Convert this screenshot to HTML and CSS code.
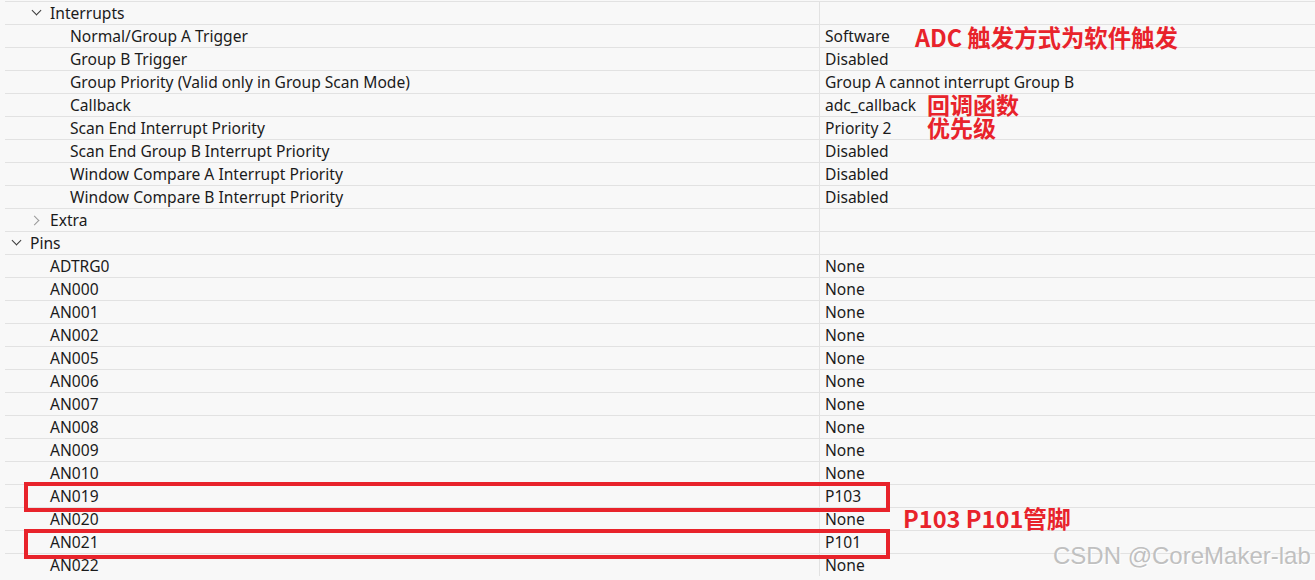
FILE: index.html
```html
<!DOCTYPE html>
<html>
<head>
<meta charset="utf-8">
<link rel="stylesheet" href="styles.css">
</head>
<body>
<div class="page">
  <div class="tree">
    <div class="row"><div class="key l1"><span class="chev down"></span>Interrupts</div><div class="val"></div></div>
    <div class="row"><div class="key l2">Normal/Group A Trigger</div><div class="val">Software</div></div>
    <div class="row"><div class="key l2">Group B Trigger</div><div class="val">Disabled</div></div>
    <div class="row"><div class="key l2">Group Priority (Valid only in Group Scan Mode)</div><div class="val">Group A cannot interrupt Group B</div></div>
    <div class="row"><div class="key l2">Callback</div><div class="val">adc_callback</div></div>
    <div class="row"><div class="key l2">Scan End Interrupt Priority</div><div class="val">Priority 2</div></div>
    <div class="row"><div class="key l2">Scan End Group B Interrupt Priority</div><div class="val">Disabled</div></div>
    <div class="row"><div class="key l2">Window Compare A Interrupt Priority</div><div class="val">Disabled</div></div>
    <div class="row"><div class="key l2">Window Compare B Interrupt Priority</div><div class="val">Disabled</div></div>
    <div class="row"><div class="key l1"><span class="chev right"></span>Extra</div><div class="val"></div></div>
    <div class="row"><div class="key l0"><span class="chev down"></span>Pins</div><div class="val"></div></div>
    <div class="row"><div class="key l1">ADTRG0</div><div class="val">None</div></div>
    <div class="row"><div class="key l1">AN000</div><div class="val">None</div></div>
    <div class="row"><div class="key l1">AN001</div><div class="val">None</div></div>
    <div class="row"><div class="key l1">AN002</div><div class="val">None</div></div>
    <div class="row"><div class="key l1">AN005</div><div class="val">None</div></div>
    <div class="row"><div class="key l1">AN006</div><div class="val">None</div></div>
    <div class="row"><div class="key l1">AN007</div><div class="val">None</div></div>
    <div class="row"><div class="key l1">AN008</div><div class="val">None</div></div>
    <div class="row"><div class="key l1">AN009</div><div class="val">None</div></div>
    <div class="row"><div class="key l1">AN010</div><div class="val">None</div></div>
    <div class="row"><div class="key l1">AN019</div><div class="val">P103</div></div>
    <div class="row"><div class="key l1">AN020</div><div class="val">None</div></div>
    <div class="row"><div class="key l1">AN021</div><div class="val">P101</div></div>
    <div class="row"><div class="key l1">AN022</div><div class="val">None</div></div>
  </div>

  <div class="note note-adc">ADC 触发方式为软件触发</div>
  <div class="note note-cb">回调函数</div>
  <div class="note note-pri">优先级</div>
  <div class="note note-pins">P103 P101管脚</div>
  <div class="box box-an019"></div>
  <div class="box box-an021"></div>
  <div class="watermark">CSDN @CoreMaker-lab</div>
</div>
</body>
</html>
```

FILE: styles.css
```css
html, body {
  margin: 0;
  padding: 0;
  background: #f8f8f8;
}

.page {
  position: relative;
  width: 1315px;
  height: 580px;
  overflow: hidden;
  background: #f8f8f8;
  font-family: "Noto Sans", "Open Sans", "Noto Sans CJK SC", sans-serif;
  font-size: 15.6px;
  color: #1b1b1b;
}

.tree {
  margin-left: 5px;
  padding-top: 1px;
}

.row {
  display: grid;
  grid-template-columns: 814px 1fr;
  height: 23px;
  box-sizing: border-box;
  border-top: 1px solid #e2e2e2;
}

.key, .val {
  display: flex;
  align-items: center;
  white-space: nowrap;
  line-height: 22px;
}

.val {
  border-left: 1px solid #e2e2e2;
  padding-left: 5px;
}

.key.l0 { padding-left: 7px; }
.key.l1 { padding-left: 27px; }
.key.l2 { padding-left: 65px; }

.key.l1:not(:has(.chev)) { padding-left: 45px; }

.chev {
  width: 10px;
  height: 10px;
  margin-right: 8px;
  position: relative;
  flex: none;
}

.chev::before {
  content: "";
  position: absolute;
  width: 6px;
  height: 6px;
  border-right: 1.7px solid #3a3a3a;
  border-bottom: 1.7px solid #3a3a3a;
}

.chev.down::before {
  left: 1px;
  top: -1px;
  transform: rotate(45deg);
}

.chev.right::before {
  left: -1px;
  top: 2px;
  transform: rotate(-45deg);
  border-color: #9a9a9a;
}

.note {
  position: absolute;
  color: #e8232b;
  font-family: "Noto Sans CJK SC", "Noto Sans", sans-serif;
  font-weight: 700;
  font-size: 23px;
  line-height: 23px;
  height: 23px;
  white-space: nowrap;
}

.note-adc { left: 915px; top: 26px; font-size: 23.4px; }
.note-cb { left: 927px; top: 93px; }
.note-pri { left: 927px; top: 116px; }
.note-pins { left: 903px; top: 507px; font-size: 23.6px; }

.box {
  position: absolute;
  left: 24px;
  width: 858px;
  height: 22px;
  border: 4px solid #e8232b;
}

.box-an019 { top: 482px; }
.box-an021 { top: 529px; }

.watermark {
  position: absolute;
  left: 1053px;
  top: 542px;
  font-family: "Liberation Sans", Arial, sans-serif;
  font-size: 24px;
  line-height: 28px;
  color: #c0c0c0;
  text-shadow: 1px 1px 0 #ffffff;
}
```
